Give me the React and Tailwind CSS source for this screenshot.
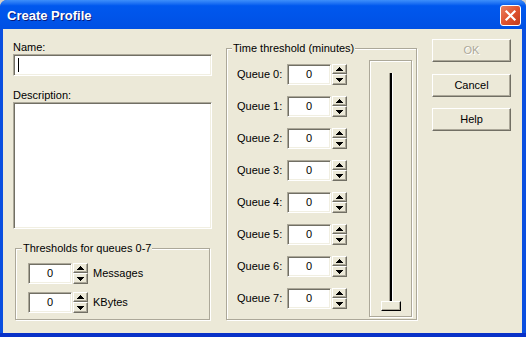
const raised =
  'border border-t-white border-l-white border-r-[#716F64] border-b-[#716F64] shadow-[inset_-1px_-1px_0_#ACA899] bg-[#ECE9D8]'
const sunken =
  'border border-t-[#ACA899] border-l-[#ACA899] border-r-white border-b-white shadow-[inset_1px_1px_0_#716F64,inset_-1px_-1px_0_#F1EFE2] bg-white'
const etched = 'border border-[#ACA899] shadow-[1px_1px_0_#fff,inset_1px_1px_0_#fff]'

function Arrow({ down }) {
  return (
    <svg width="7" height="4" viewBox="0 0 7 4" shapeRendering="crispEdges">
      {down ? (
        <g fill="#000">
          <rect x="0" y="0" width="7" height="1" />
          <rect x="1" y="1" width="5" height="1" />
          <rect x="2" y="2" width="3" height="1" />
          <rect x="3" y="3" width="1" height="1" />
        </g>
      ) : (
        <g fill="#000">
          <rect x="3" y="0" width="1" height="1" />
          <rect x="2" y="1" width="3" height="1" />
          <rect x="1" y="2" width="5" height="1" />
          <rect x="0" y="3" width="7" height="1" />
        </g>
      )}
    </svg>
  )
}

function Spinner() {
  return (
    <div className="flex h-[21px]">
      <div className={`w-[44px] h-full flex items-center justify-center text-black ${sunken}`}>0</div>
      <div className="ml-[1px] w-[15px] flex flex-col">
        <div className={`h-[10px] flex items-center justify-center ${raised}`}>
          <Arrow />
        </div>
        <div className={`h-[11px] flex items-center justify-center ${raised}`}>
          <Arrow down />
        </div>
      </div>
    </div>
  )
}

function Legend({ children, ml = 'ml-[6px]' }) {
  return (
    <div className={`-mt-[7px] ${ml} px-[1px] w-fit bg-[#ECE9D8] leading-[13px]`}>{children}</div>
  )
}

function DlgButton({ label, disabled }) {
  return (
    <div
      className={`h-[23px] w-[79px] flex items-center justify-center ${raised} ${
        disabled ? 'text-[#ACA899] [text-shadow:1px_1px_0_#fff]' : 'text-black'
      }`}
    >
      {label}
    </div>
  )
}

export default function App() {
  const queues = [0, 1, 2, 3, 4, 5, 6, 7]

  return (
    <div className="w-[526px] h-[337px] bg-[#d4d0c8]">
      <div
        className="w-full h-full flex flex-col rounded-t-[7px] bg-[#0a4fe0] text-[11px] text-black"
        style={{ fontFamily: '"Liberation Sans", Arial, sans-serif' }}
      >
        {/* Title bar */}
        <div className="h-[29px] flex items-start rounded-t-[7px] bg-linear-to-b from-[#3d8ffa] via-[#0058ee] via-20% to-[#0050e4]">
          <div className="pl-[7px] pt-[8px] text-[13px] leading-[16px] font-bold text-white [text-shadow:1px_1px_0_#0a1a7a]">
            Create Profile
          </div>
          <div className="ml-auto mr-[5px] mt-[5px] w-[21px] h-[21px] rounded-[3px] border border-white bg-linear-to-br from-[#e9805f] via-[#e0532f] to-[#c23c1c] flex items-center justify-center">
            <svg width="13" height="13" viewBox="0 0 13 13">
              <path d="M2.5 2.5 L10.5 10.5 M10.5 2.5 L2.5 10.5" stroke="#fff" strokeWidth="2.2" strokeLinecap="square" />
            </svg>
          </div>
        </div>

        {/* Client area */}
        <div className="ml-[3px] mr-[4px] h-[304px] bg-[#ECE9D8] flex">
          {/* Left column */}
          <div className="ml-[10px] w-[199px] flex flex-col">
            <div className="mt-[12px] leading-[13px]">Name:</div>
            <div className={`h-[22px] flex items-center pl-[4px] ${sunken}`}>
              <div className="w-[1px] h-[14px] bg-black" />
            </div>
            <div className="mt-[13px] leading-[13px]">Description:</div>
            <div className={`h-[127px] ${sunken}`} />
            <div className={`mt-[19px] ml-[2px] w-[195px] h-[72px] flex flex-col ${etched}`}>
              <Legend ml="ml-[6px]">Thresholds for queues 0-7</Legend>
              <div className="mt-[8px] pl-[12px] flex flex-col gap-[8px]">
                <div className="flex items-center">
                  <Spinner />
                  <span className="ml-[5px]">Messages</span>
                </div>
                <div className="flex items-center">
                  <Spinner />
                  <span className="ml-[5px]">KBytes</span>
                </div>
              </div>
            </div>
          </div>

          {/* Time threshold group */}
          <div className={`mt-[19px] ml-[14px] w-[191px] h-[272px] flex flex-col ${etched}`}>
            <Legend ml="ml-[5px]">Time threshold (minutes)</Legend>
            <div className="flex">
              <div className="pl-[10px] pt-[9px] flex flex-col gap-[11px]">
                {queues.map((q) => (
                  <div key={q} className="flex items-center">
                    <span className="w-[50px]">Queue {q}:</span>
                    <Spinner />
                  </div>
                ))}
              </div>
              <div className={`ml-[22px] mt-[5px] w-[43px] h-[257px] flex flex-col items-center pt-[12px] ${etched}`}>
                <div className="w-[4px] h-[228px] border-l border-l-[#ACA899] border-r border-r-white bg-black" />
                <div className={`w-[20px] h-[10px] ${raised} border-r-black border-b-black`} />
              </div>
            </div>
          </div>

          {/* Buttons */}
          <div className="ml-[15px] mt-[10px] flex flex-col">
            <DlgButton label="OK" disabled />
            <div className="mt-[12px]">
              <DlgButton label="Cancel" />
            </div>
            <div className="mt-[11px]">
              <DlgButton label="Help" />
            </div>
          </div>
        </div>
        <div className="flex-1 bg-[#0831c8]" />
      </div>
    </div>
  )
}
